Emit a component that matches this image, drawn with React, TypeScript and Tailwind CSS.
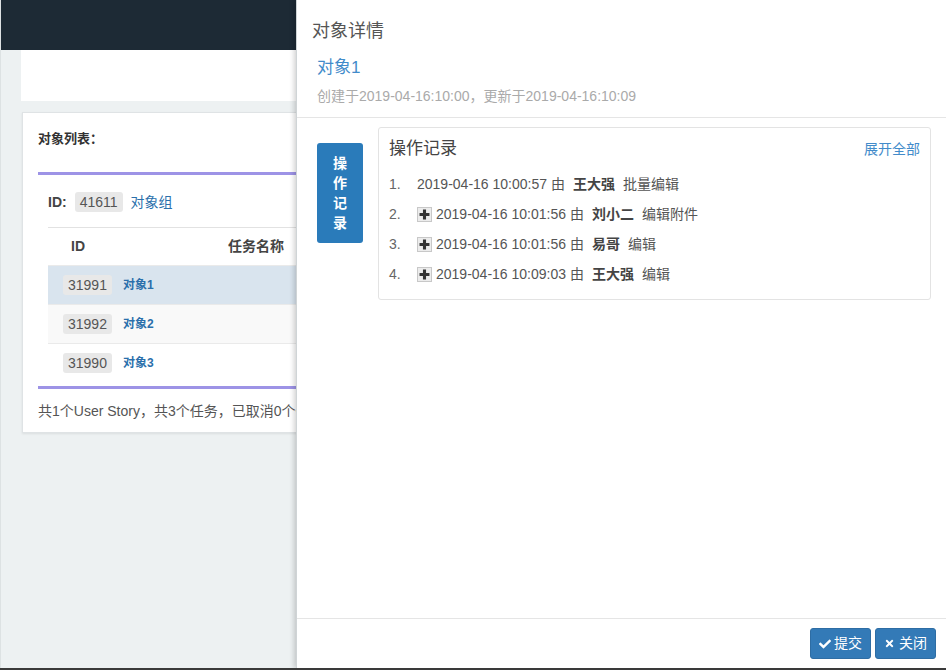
import { FaCheck, FaTimes } from 'react-icons/fa';

const FONT = { fontFamily: '"Liberation Sans", "Noto Sans CJK SC", sans-serif' };

const ROWS = [
  { id: '31991', name: '对象1', cls: 'bg-[#d9e4ee]' },
  { id: '31992', name: '对象2', cls: 'bg-[#f9f9f9]' },
  { id: '31990', name: '对象3', cls: 'bg-white' },
];

const LOGS = [
  { time: '2019-04-16 10:00:57', user: '王大强', action: '批量编辑', expandable: false },
  { time: '2019-04-16 10:01:56', user: '刘小二', action: '编辑附件', expandable: true },
  { time: '2019-04-16 10:01:56', user: '易哥', action: '编辑', expandable: true },
  { time: '2019-04-16 10:09:03', user: '王大强', action: '编辑', expandable: true },
];

function PlusBox() {
  return (
    <span className="inline-flex items-center justify-center w-[15px] h-[15px] border border-[#c8c8c8] bg-[#ececec] mr-[4px]">
      <svg width="11" height="11" viewBox="0 0 10 10">
        <path d="M3.6 0.5h2.8v3.1h3.1v2.8H6.4v3.1H3.6V6.4H0.5V3.6h3.1z" fill="#333" />
      </svg>
    </span>
  );
}

function Badge({ children, size = 'text-[13px]' }: { children: string; size?: string }) {
  return (
    <span className={`inline-block px-[5px] leading-[20px] ${size} text-[#555] bg-[#e8e8e8] rounded-[3px]`}>
      {children}
    </span>
  );
}

function ListPage() {
  return (
    <div className="flex flex-col h-full bg-[#edf1f2] border-l border-[#dde2e3]">
      <div className="h-[50px] bg-[#1d2a35] shrink-0" />
      <div className="ml-[20px] h-[51px] bg-white shrink-0" />
      <div className="ml-[21px] mt-[11px] w-[900px] bg-white border border-[#dfe3e5] shadow-[0_1px_2px_rgba(0,0,0,0.08)] px-[15px] pt-[17px] pb-[12px]">
        <div className="text-[13px] font-bold text-[#333] leading-[18px]">对象列表：</div>
        <div className="mt-[24px] h-[3px] bg-[#9d93e6]" />
        <div className="flex items-center gap-[8px] pl-[10px] mt-[16px] h-[22px]">
          <span className="text-[14px] font-bold text-[#444]">ID:</span>
          <Badge size="text-[14px]">41611</Badge>
          <span className="text-[14px] text-[#2a6fab]">对象组</span>
        </div>
        <div className="ml-[10px] mt-[14px] border-t border-[#e2e2e2]">
          <div className="flex items-center h-[37px] text-[14px] font-bold text-[#444]">
            <span className="pl-[23px] w-[180px]">ID</span>
            <span>任务名称</span>
          </div>
          {ROWS.map((r) => (
            <div key={r.id} className={`flex items-center gap-[11px] h-[39px] pl-[15px] border-t border-[#eaeaea] ${r.cls}`}>
              <Badge size="text-[14px]">{r.id}</Badge>
              <span className="text-[12px] font-bold text-[#2a6fab]">{r.name}</span>
            </div>
          ))}
        </div>
        <div className="mt-[4px] h-[3px] bg-[#9d93e6]" />
        <div className="mt-[13px] text-[14px] text-[#555] leading-[18px] whitespace-nowrap">
          共1个User Story，共3个任务，已取消0个任务，已完成0个任务
        </div>
      </div>
    </div>
  );
}

function Drawer() {
  return (
    <div className="absolute top-0 right-0 w-[650px] h-[668px] bg-white shadow-[-2px_0_5px_rgba(0,0,0,0.18)] border-l border-[#cfd4d6] flex flex-col">
      <div className="pl-[15px] pt-[19px] pb-[12px] border-b border-[#e5e5e5] shrink-0">
        <div className="text-[18px] text-[#555] leading-[24px]">对象详情</div>
        <div className="pl-[5px] mt-[14px] text-[17px] text-[#428bca] leading-[22px]">对象1</div>
        <div className="pl-[5px] mt-[8px] text-[14px] text-[#aaa] leading-[18px]">
          创建于2019-04-16:10:00，更新于2019-04-16:10:09
        </div>
      </div>
      <div className="flex-1 flex items-start gap-[15px] pl-[20px] pr-[15px] pt-[9px]">
        <div className="mt-[16px] w-[46px] h-[100px] rounded-[3px] bg-[#2a7bba] flex flex-col items-center justify-center text-white text-[14px] font-bold leading-[20px]">
          <span>操</span>
          <span>作</span>
          <span>记</span>
          <span>录</span>
        </div>
        <div className="flex-1 border border-[#e3e3e3] rounded-[3px] px-[10px] pt-[9px] pb-[10px]">
          <div className="flex items-center justify-between">
            <span className="text-[17px] text-[#444] leading-[24px]">操作记录</span>
            <span className="text-[14px] text-[#428bca]">展开全部</span>
          </div>
          <ol className="mt-[8px]">
            {LOGS.map((l, i) => (
              <li key={i} className="flex items-center h-[30px] text-[14px] text-[#555]">
                <span className="w-[28px] text-[#666]">{i + 1}.</span>
                {l.expandable && <PlusBox />}
                <span>{l.time} 由</span>
                <span className="ml-[8px] font-bold text-[#444]">{l.user}</span>
                <span className="ml-[8px]">{l.action}</span>
              </li>
            ))}
          </ol>
        </div>
      </div>
      <div className="shrink-0 border-t border-[#e5e5e5] h-[50px] flex items-center justify-end gap-[4px] pr-[10px]">
        <button className="h-[31px] px-[8px] flex items-center gap-[3px] bg-[#337ab7] border border-[#2e6da4] rounded-[3px] text-white text-[14px]">
          <FaCheck className="w-[12px] h-[12px]" />
          提交
        </button>
        <button className="h-[31px] px-[8px] flex items-center gap-[4px] bg-[#337ab7] border border-[#2e6da4] rounded-[3px] text-white text-[14px]">
          <FaTimes className="w-[11px] h-[11px]" />
          关闭
        </button>
      </div>
    </div>
  );
}

export default function App() {
  return (
    <div style={FONT} className="w-[946px] h-[670px] flex flex-col overflow-hidden">
      <div className="relative h-[668px] overflow-hidden">
        <ListPage />
        <Drawer />
      </div>
      <div className="h-[2px] bg-[#3a3a3a]" />
    </div>
  );
}
